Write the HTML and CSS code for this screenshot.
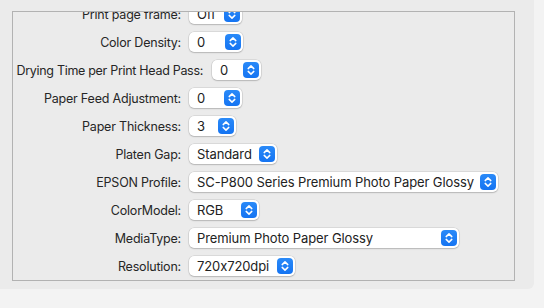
FILE: index.html
```html
<!DOCTYPE html>
<html>
<head>
<meta charset="utf-8">
<link rel="stylesheet" href="styles.css">
</head>
<body>
<div class="panel">
  <div class="group">
    <div class="list">
      <div class="row"><span class="label">Print page frame:</span><span class="popup w-off"><span class="val">Off</span><span class="step"><svg viewBox="0 0 16 16"><path d="M5.2 6.6 8 3.9 10.8 6.6M5.2 9.4 8 12.1 10.8 9.4"/></svg></span></span></div>
      <div class="row"><span class="label">Color Density:</span><span class="popup w-cd"><span class="val">0</span><span class="step"><svg viewBox="0 0 16 16"><path d="M5.2 6.6 8 3.9 10.8 6.6M5.2 9.4 8 12.1 10.8 9.4"/></svg></span></span></div>
      <div class="row row-wide"><span class="label">Drying Time per Print Head Pass:</span><span class="popup w-dry"><span class="val">0</span><span class="step"><svg viewBox="0 0 16 16"><path d="M5.2 6.6 8 3.9 10.8 6.6M5.2 9.4 8 12.1 10.8 9.4"/></svg></span></span></div>
      <div class="row"><span class="label">Paper Feed Adjustment:</span><span class="popup w-pf"><span class="val">0</span><span class="step"><svg viewBox="0 0 16 16"><path d="M5.2 6.6 8 3.9 10.8 6.6M5.2 9.4 8 12.1 10.8 9.4"/></svg></span></span></div>
      <div class="row"><span class="label">Paper Thickness:</span><span class="popup w-pt"><span class="val">3</span><span class="step"><svg viewBox="0 0 16 16"><path d="M5.2 6.6 8 3.9 10.8 6.6M5.2 9.4 8 12.1 10.8 9.4"/></svg></span></span></div>
      <div class="row"><span class="label">Platen Gap:</span><span class="popup w-pg"><span class="val">Standard</span><span class="step"><svg viewBox="0 0 16 16"><path d="M5.2 6.6 8 3.9 10.8 6.6M5.2 9.4 8 12.1 10.8 9.4"/></svg></span></span></div>
      <div class="row"><span class="label">EPSON Profile:</span><span class="popup w-ep"><span class="val">SC-P800 Series Premium Photo Paper Glossy</span><span class="step"><svg viewBox="0 0 16 16"><path d="M5.2 6.6 8 3.9 10.8 6.6M5.2 9.4 8 12.1 10.8 9.4"/></svg></span></span></div>
      <div class="row"><span class="label">ColorModel:</span><span class="popup w-cm"><span class="val">RGB</span><span class="step"><svg viewBox="0 0 16 16"><path d="M5.2 6.6 8 3.9 10.8 6.6M5.2 9.4 8 12.1 10.8 9.4"/></svg></span></span></div>
      <div class="row"><span class="label">MediaType:</span><span class="popup w-mt"><span class="val">Premium Photo Paper Glossy</span><span class="step"><svg viewBox="0 0 16 16"><path d="M5.2 6.6 8 3.9 10.8 6.6M5.2 9.4 8 12.1 10.8 9.4"/></svg></span></span></div>
      <div class="row"><span class="label">Resolution:</span><span class="popup w-rs"><span class="val">720x720dpi</span><span class="step"><svg viewBox="0 0 16 16"><path d="M5.2 6.6 8 3.9 10.8 6.6M5.2 9.4 8 12.1 10.8 9.4"/></svg></span></span></div>
    </div>
  </div>
</div>
</body>
</html>
```

FILE: styles.css
```css
html, body {
  margin: 0;
  padding: 0;
  background: #f3f3f3;
  width: 544px;
  height: 308px;
  overflow: hidden;
  font-family: Inter, "Liberation Sans", sans-serif;
  font-size: 12.5px;
  letter-spacing: -0.2px;
  font-feature-settings: "calt" 0;
  color: #262626;
}

.panel {
  width: 534px;
  height: 289px;
  box-sizing: border-box;
  background: #ebebeb;
  border-bottom-right-radius: 6px;
  padding: 11px 0 0 12px;
}

.group {
  width: 503px;
  height: 270px;
  box-sizing: border-box;
  border: 1px solid #b2b2b2;
  overflow: hidden;
}

.list {
  margin-top: -12px;
  display: flex;
  flex-direction: column;
}

.row {
  height: 28px;
  display: flex;
  align-items: center;
  gap: 8px;
}

.label {
  width: 168px;
  text-align: right;
  white-space: nowrap;
  flex-shrink: 0;
}

.row-wide .label {
  width: 190px;
  letter-spacing: -0.3px;
}

.row-wide {
  gap: 9px;
}

.popup {
  height: 20px;
  box-sizing: border-box;
  background: #ffffff;
  border-radius: 5px;
  box-shadow: 0 0 0 0.5px rgba(0, 0, 0, 0.14), 0 1px 1.5px rgba(0, 0, 0, 0.16);
  display: flex;
  align-items: center;
  justify-content: space-between;
  padding: 0 2px 0 8px;
  color: #222;
  flex-shrink: 0;
  font-size: 13px;
  letter-spacing: -0.1px;
}

.val {
  white-space: nowrap;
}

.step {
  width: 16px;
  height: 16px;
  border-radius: 4px;
  background: linear-gradient(#2a8af8, #1574f2);
  display: flex;
  flex-shrink: 0;
}

.step svg {
  width: 16px;
  height: 16px;
  fill: none;
  stroke: #ffffff;
  stroke-width: 1.5;
  stroke-linecap: round;
  stroke-linejoin: round;
}

.w-off { width: 53px; }
.w-cd { width: 54px; }
.w-dry { width: 49px; }
.w-pf { width: 53px; }
.w-pt { width: 47px; }
.w-pg { width: 88px; }
.w-ep { width: 309px; }
.w-cm { width: 70px; }
.w-mt { width: 270px; }
.w-rs { width: 106px; }
```
